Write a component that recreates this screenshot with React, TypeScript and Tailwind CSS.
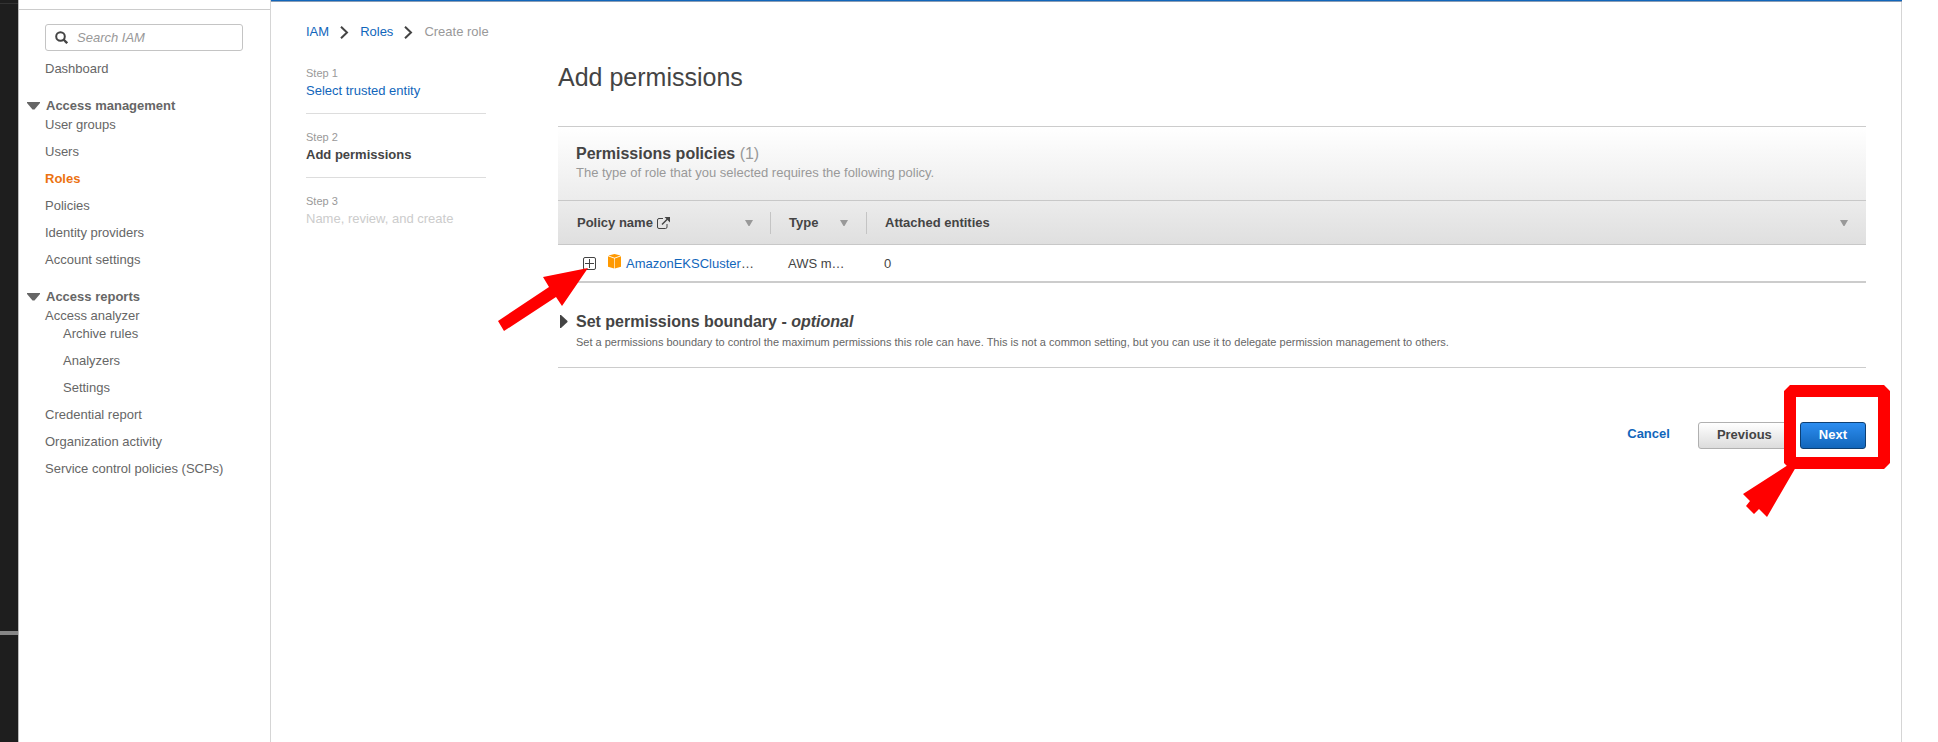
import type { ReactNode } from "react";

function NavItem({ children, active = false, indent = false, tight = false }: {
  children: ReactNode;
  active?: boolean;
  indent?: boolean;
  tight?: boolean;
}) {
  return (
    <li className={`${indent ? "pl-[18px]" : ""} ${tight ? "" : "pb-[9px]"}`}>
      <a href="#" className={active ? "font-bold text-[#ec7211]" : ""}>{children}</a>
    </li>
  );
}

function NavHeading({ children }: { children: ReactNode }) {
  return (
    <button type="button" aria-expanded="true" className="mt-[10px] -ml-[18px] flex items-center gap-[6px] pb-px font-bold">
      <svg width="13" height="8" viewBox="0 0 13 8" fill="#666" aria-hidden="true">
        <path d="M0 0h13v1L7.500 7.500h-2L0 1z" />
      </svg>
      {children}
    </button>
  );
}

function Chevron() {
  return (
    <svg width="9" height="13" viewBox="0 0 9 13" fill="none" stroke="#444" strokeWidth="2" aria-hidden="true">
      <path d="M1 .7l6 5.800-6 5.800" />
    </svg>
  );
}

function SortArrow() {
  return (
    <svg width="8" height="6" viewBox="0 0 8 6" fill="#999" aria-hidden="true">
      <path d="M0 0h8L4.500 6h-1z" />
    </svg>
  );
}

function Column({ children, first = false, last = false }: { children: ReactNode; first?: boolean; last?: boolean }) {
  return (
    <th scope="col" className="h-[43px] p-0 text-left font-bold">
      <div className={`flex h-[22px] items-center justify-between ${first ? "pl-[19px]" : "pl-[18px]"} ${last ? "pr-[18px]" : "border-r border-[#c4c4c4]"} ${first ? "pr-[17px]" : "pr-[18px]"}`}>
        <span className="flex items-center gap-[4px]">{children}</span>
        <button type="button" aria-label="Sort">
          <SortArrow />
        </button>
      </div>
    </th>
  );
}

function Step({ number, children, last = false }: { number: number; children: ReactNode; last?: boolean }) {
  return (
    <li className={`pt-[14px] pb-[13px] ${last ? "" : "border-b border-[#ddd]"}`}>
      <div className="text-[11px] leading-[18px] text-[#999]">Step {number}</div>
      <div>{children}</div>
    </li>
  );
}

export default function App() {
  return (
    <div className="flex min-h-screen bg-white font-['Liberation_Sans',Arial,sans-serif] text-[13px] leading-[18px] text-[#444]">
      <div className="relative w-[18px] shrink-0 bg-[#1e1e1e]">
        <div className="absolute top-[3px] h-px w-full bg-[#333]" />
        <div className="absolute top-[631px] h-[4px] w-full bg-[#878787]" />
      </div>

      <aside className="w-[253px] shrink-0 border-x border-l-[#bbb] border-r-[#d5d5d5] text-[#666]">
        <div className="h-[10px] border-b border-[#ccc]" />
        <nav className="px-[26px] pt-[14px]">
          <label className="flex h-[27px] w-[198px] items-center gap-[9px] rounded-[3px] border border-[#c4c4c4] pl-[9px]">
            <svg width="13" height="13" viewBox="0 0 13 13" fill="none" stroke="#444" strokeWidth="2" aria-label="Search">
              <circle cx="5.500" cy="5.500" r="4.300" />
              <path d="M8.500 8.500l3.700 3.700" strokeWidth="2.400" />
            </svg>
            <input type="text" aria-label="Search IAM" placeholder="Search IAM" className="w-[150px] min-w-0 bg-transparent outline-none placeholder:italic placeholder:text-[#999]" />
          </label>
          <ul className="pt-[9px]">
            <NavItem>Dashboard</NavItem>
          </ul>
          <NavHeading>Access management</NavHeading>
          <ul>
            <NavItem>User groups</NavItem>
            <NavItem>Users</NavItem>
            <NavItem active>Roles</NavItem>
            <NavItem>Policies</NavItem>
            <NavItem>Identity providers</NavItem>
            <NavItem>Account settings</NavItem>
          </ul>
          <NavHeading>Access reports</NavHeading>
          <ul>
            <NavItem tight>Access analyzer</NavItem>
            <NavItem indent>Archive rules</NavItem>
            <NavItem indent>Analyzers</NavItem>
            <NavItem indent>Settings</NavItem>
            <NavItem>Credential report</NavItem>
            <NavItem>Organization activity</NavItem>
            <NavItem>Service control policies (SCPs)</NavItem>
          </ul>
        </nav>
      </aside>

      <div className="mr-[36px] flex min-w-0 flex-1 flex-col">
        <div className="h-[2px] border-b border-[#8a9db5] bg-[#1166bb]" />
        <main className="flex-1 border-r border-[#d5d5d5] pt-[21px] pr-[35px] pl-[35px]">
          <nav aria-label="Breadcrumb" className="flex items-center gap-[11px]">
            <a href="#" className="text-[#1166bb]">IAM</a>
            <Chevron />
            <a href="#" className="text-[#1166bb]">Roles</a>
            <Chevron />
            <span className="text-[#999]">Create role</span>
          </nav>

          <div className="flex items-start gap-[72px]">
            <ol className="w-[180px] shrink-0 pt-[9px]">
              <Step number={1}><a href="#" className="text-[#1166bb]">Select trusted entity</a></Step>
              <Step number={2}><span className="font-bold">Add permissions</span></Step>
              <Step number={3} last><span className="text-[#ccc]">Name, review, and create</span></Step>
            </ol>

            <div className="min-w-0 flex-1 pt-[20px]">
              <h1 className="text-[25px] leading-[32px]">Add permissions</h1>

              <section className="mt-[33px]">
                <header className="border-t border-[#ccc] bg-linear-to-b from-white to-[#ececec] px-[18px] pt-[17px] pb-[18px]">
                  <h2 className="text-[16px] leading-[20px] font-bold">
                    Permissions policies <span className="font-normal text-[#999]">(1)</span>
                  </h2>
                  <p className="text-[#999]">The type of role that you selected requires the following policy.</p>
                </header>
                <table className="w-full table-fixed border-separate border-spacing-0 border-b-2 border-[#ccc]">
                  <colgroup>
                    <col className="w-[213px]" />
                    <col className="w-[96px]" />
                    <col />
                  </colgroup>
                  <thead className="bg-linear-to-b from-[#ececec] to-[#dfdfdf] [&_th]:border-y [&_th]:border-[#c8c8c8]">
                    <tr className="h-[45px]">
                      <Column first>
                        Policy name
                        <svg width="13" height="12" viewBox="0 0 13 12" fill="none" stroke="#444" aria-hidden="true">
                          <path d="M6 1.500H2Q.5 1.500.5 3v7q0 1.500 1.500 1.500h6.500q1.500 0 1.500-1.500V7" />
                          <path d="M5 7.500l5.500-5.500" strokeWidth="1.500" />
                          <path d="M7.500 0H13v5.500z" fill="#444" stroke="none" />
                        </svg>
                      </Column>
                      <Column>Type</Column>
                      <Column last>Attached entities</Column>
                    </tr>
                  </thead>
                  <tbody>
                    <tr className="h-[36px]">
                      <td className="p-0 pl-[25px]">
                        <div className="flex items-center">
                          <button type="button" aria-label="Expand policy" className="relative">
                            <svg width="13" height="13" viewBox="0 0 13 13" fill="none" stroke="#444" aria-hidden="true">
                              <rect x=".5" y=".5" width="12" height="12" rx="1.500" />
                              <path d="M6.500 2v9M2 6.500h9" />
                            </svg>
                            <svg className="pointer-events-none absolute top-[11px] right-[8px] z-10" width="90" height="64" viewBox="0 0 90 64" fill="#f00" aria-hidden="true">
                              <path d="M90 0L45 9l6 10L0 53l6 10 52-34 6 9z" />
                            </svg>
                          </button>
                          <svg width="13" height="15" viewBox="0 0 13 15" fill="#f90" className="mr-[5px] mb-[4px] ml-[12px]" aria-hidden="true">
                            <path d="M6.500 0L12.500 1.600 6.500 3.700.5 1.600z" />
                            <path d="M0 2.300l6.200 2.200v10L0 12.700z" />
                            <path d="M13 2.300L6.800 4.500v10l6.200-1.800z" />
                          </svg>
                          <span className="pt-px whitespace-nowrap"><a href="#" className="text-[#1166bb]">AmazonEKSCluster</a>…</span>
                        </div>
                      </td>
                      <td className="p-0 pt-px pl-[17px]">AWS m…</td>
                      <td className="p-0 pt-px pl-[17px]">0</td>
                    </tr>
                  </tbody>
                </table>
              </section>

              <section className="mt-[29px] border-b border-[#ccc] pb-[16px]">
                <h2 className="text-[16px] leading-[20px] font-bold">
                  <button type="button" aria-expanded="false" className="flex items-center">
                    <svg width="18" height="13" viewBox="0 0 18 13" fill="#444" className="mb-px" aria-hidden="true">
                      <path d="M2 0h1l6.500 6v1L3 13H2z" />
                    </svg>
                    <span>Set permissions boundary - <em>optional</em></span>
                  </button>
                </h2>
                <p className="pt-px pl-[18px] text-[11px] leading-[18px] text-[#666]">
                  Set a permissions boundary to control the maximum permissions this role can have. This is not a common setting, but you can use it to delegate permission management to others.
                </p>
              </section>

              <div className="mt-[54px] flex justify-end font-bold">
                <a href="#" className="mr-[28px] py-[3px] text-[#1166bb]">Cancel</a>
                <button type="button" className="mr-[9px] h-[27px] rounded-[3px] border border-[#b0b0b0] bg-linear-to-b from-white to-[#dcdcdc] px-[18px] pb-[2px]">Previous</button>
                <div className="relative">
                  <button type="button" className="h-[27px] rounded-[3px] border border-[#0d3f73] bg-linear-to-b from-[#2c8df0] to-[#1166bb] px-[18px] pb-[2px] text-white">Next</button>
                  <svg className="pointer-events-none absolute -top-[37px] -right-[24px]" width="147" height="132" viewBox="0 0 147 132" fill="#f00" aria-hidden="true">
                    <path d="M47 0H141l6 6V78l-6 6H47l-6-6V6zM53 12V72H135V12z" fillRule="evenodd" />
                    <path d="M45 80L0 109l7 7-4 5 8 8 5-5 8 8L53 82z" />
                  </svg>
                </div>
              </div>
            </div>
          </div>
        </main>
      </div>
    </div>
  );
}
